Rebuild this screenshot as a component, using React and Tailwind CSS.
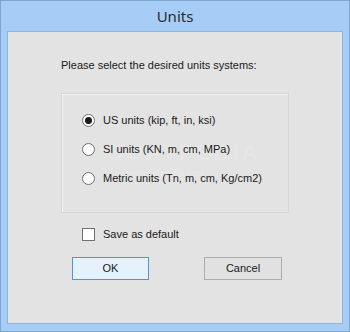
import React from "react";

function Radio({ checked, label }) {
  return (
    <div className="flex items-center h-[16px]">
      <div className="w-[13px] h-[13px] rounded-full border border-[#6f6f6f] bg-white flex items-center justify-center">
        {checked && <div className="w-[7px] h-[7px] rounded-full bg-[#1a1a1a]" />}
      </div>
      <span className="ml-[8px] text-[11px] leading-[13px] text-[#1a1a1a]">{label}</span>
    </div>
  );
}

export default function App() {
  return (
    <div
      className="w-[350px] h-[332px] bg-[#a6cdf6] border border-[#7fa5d3] flex flex-col"
      style={{ fontFamily: '"Liberation Sans", Arial, sans-serif' }}
    >
      <div
        className="h-[30px] flex items-center justify-center text-[15px] text-[#2b2b2b]"
        style={{ fontFamily: '"Noto Sans", "Open Sans", sans-serif' }}
      >
        Units
      </div>
      <div className="mx-[6px] h-[293px] border border-[#93b3d8] bg-[#e3e3e3] relative">
        <div className="absolute left-[100px] top-[104px] text-[22px] font-bold tracking-[3px] text-white opacity-[0.12] pointer-events-none">
          SOFTPEDIA
        </div>
        <div className="absolute left-[118px] top-[135px] text-[9px] text-[#ffffff] opacity-[0.25] pointer-events-none">
          www.softpedia.com
        </div>
        <div className="relative ml-[53px] mt-[27px] flex flex-col">
          <div className="text-[11px] leading-[13px] text-[#1a1a1a]">
            Please select the desired units systems:
          </div>
          <div className="mt-[21px] w-[228px] h-[120px] border border-[#d6d6d6] shadow-[inset_1px_1px_0_#f4f4f4] flex flex-col pl-[20px] pt-[18px] gap-[13px]">
            <Radio checked label="US units (kip, ft, in, ksi)" />
            <Radio label="SI units (KN, m, cm, MPa)" />
            <Radio label="Metric units (Tn, m, cm, Kg/cm2)" />
          </div>
          <div className="mt-[14px] ml-[21px] flex items-center h-[14px]">
            <div className="w-[13px] h-[13px] border border-[#707070] bg-white" />
            <span className="ml-[8px] text-[11px] leading-[13px] text-[#1a1a1a]">Save as default</span>
          </div>
        </div>
        <div className="relative mt-[16px] ml-[64px] flex">
          <button className="w-[77px] h-[23px] border border-[#4f94e0] bg-[#e5f1fb] text-[11px] text-[#1a1a1a] flex items-center justify-center">
            OK
          </button>
          <button className="ml-[55px] w-[78px] h-[23px] border border-[#adadad] bg-[#e1e1e1] text-[11px] text-[#1a1a1a] flex items-center justify-center">
            Cancel
          </button>
        </div>
      </div>
    </div>
  );
}
